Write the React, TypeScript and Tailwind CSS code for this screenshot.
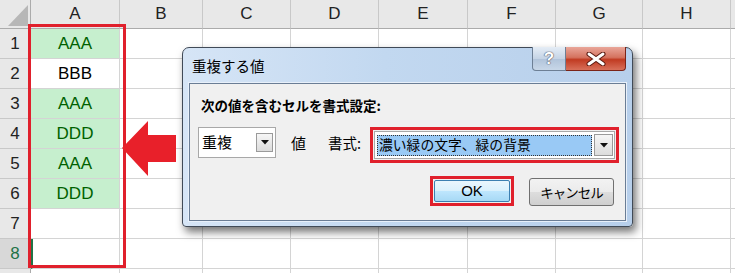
import React from "react";

const COLS = [
  { label: "A", w: 89 },
  { label: "B", w: 83 },
  { label: "C", w: 88 },
  { label: "D", w: 88 },
  { label: "E", w: 89 },
  { label: "F", w: 88 },
  { label: "G", w: 87 },
  { label: "H", w: 88 },
  { label: "", w: 60 },
];

const ROWS: { v: string; g: boolean }[] = [
  { v: "AAA", g: true },
  { v: "BBB", g: false },
  { v: "AAA", g: true },
  { v: "DDD", g: true },
  { v: "AAA", g: true },
  { v: "DDD", g: true },
  { v: "", g: false },
  { v: "", g: false },
  { v: "", g: false },
];

const latin = "font-['Liberation_Sans','Noto_Sans_CJK_JP',sans-serif]";
const jp = "font-['Noto_Sans_CJK_JP',sans-serif]";

function Sheet() {
  return (
    <div className={`flex flex-col ${latin} text-[17px] text-black`}>
      <div className="flex h-[29px] shrink-0">
        <div className="relative w-[31px] shrink-0 bg-[#e8e8e8] border-r border-b border-[#ababab]">
          <svg className="absolute left-0 top-0" width="31" height="29" viewBox="0 0 31 29">
            <polygon points="8,26 28,26 28,5" fill="#b7b7b7" />
          </svg>
        </div>
        {COLS.map((c, i) => (
          <div
            key={i}
            style={{ width: c.w }}
            className="shrink-0 flex items-center justify-center bg-[#e8e8e8] border-r border-[#c8c8c8] border-b border-b-[#ababab] text-[#222]"
          >
            {c.label}
          </div>
        ))}
      </div>
      {ROWS.map((r, ri) => (
        <div key={ri} className="flex h-[30px] shrink-0">
          <div
            className={`w-[31px] shrink-0 flex items-center justify-center border-r border-r-[#ababab] border-b border-[#c8c8c8] ${
              ri === 7 ? "bg-[#d8d8d8] text-[#217346]" : "bg-[#e8e8e8] text-[#222]"
            }`}
          >
            {ri < 8 ? ri + 1 : ""}
          </div>
          {COLS.map((c, ci) => (
            <div
              key={ci}
              style={{ width: c.w }}
              className={`shrink-0 flex items-center justify-center border-r border-b border-[#d4d4d4] ${
                ci === 0 && r.g ? "bg-[#c6efce] text-[#006100]" : "bg-white"
              } ${ci === 0 && ri === 7 ? "border-l-2 border-l-[#217346]" : ""}`}
            >
              {ci === 0 ? r.v : ""}
            </div>
          ))}
        </div>
      ))}
    </div>
  );
}

function Arrow() {
  return (
    <svg className="absolute left-[121px] top-[120px]" width="56" height="57" viewBox="0 0 56 57">
      <polygon points="1,28 27,1 27,15 55,15 55,42 27,42 27,56" fill="#e8202a" />
    </svg>
  );
}

function DropBtn({ w = 17, h = 20 }: { w?: number; h?: number }) {
  return (
    <div
      style={{ width: w, height: h }}
      className="flex items-center justify-center border border-[#9a9a9a] bg-[linear-gradient(#f6f6f6,#dcdcdc)]"
    >
      <svg width="8" height="5" viewBox="0 0 8 5">
        <polygon points="0,0 8,0 4,4.5" fill="#111" />
      </svg>
    </div>
  );
}

function Dialog() {
  return (
    <div className="absolute left-[182px] top-[47px] w-[451px] h-[180px] rounded-t-[7px] rounded-b-[4px] border border-[#404a57] bg-[linear-gradient(90deg,#d6e5f6,#c2d8f0_45%,#b7cfeb)] shadow-[3px_5px_8px_rgba(0,0,0,0.55)] flex flex-col">
      <div className="h-[35px] flex pl-[9px] pr-[6px] shrink-0">
        <div className={`${jp} text-[14.5px] text-black self-center mt-[1px]`}>重複する値</div>
        <div className="ml-auto flex h-[24px] -mt-[1px]">
          <div className="w-[34px] h-full rounded-bl-[4px] border border-[#6d7f95] border-t-0 bg-[linear-gradient(#e5edf6,#c5d4e6_50%,#b0c3da_51%,#c8d7e8)] flex items-center justify-center">
            <span className={`${latin} font-bold text-[17px] text-white [text-shadow:0_0_1px_#556,0_0_1px_#556,0_0_1px_#556]`}>?</span>
          </div>
          <div className="w-[60px] h-full rounded-br-[4px] border border-[#7b2418] border-t-0 border-l-0 bg-[linear-gradient(#e9a699,#d5735f_45%,#c13b22_55%,#d8705a)] flex items-center justify-center">
            <svg width="20" height="14" viewBox="0 0 20 14">
              <path d="M3 2 L17 12 M17 2 L3 12" stroke="#5a1a10" strokeWidth="5" strokeLinecap="round" />
              <path d="M3 2 L17 12 M17 2 L3 12" stroke="#fff" strokeWidth="3" strokeLinecap="round" />
            </svg>
          </div>
        </div>
      </div>
      <div className="mx-[6px] mb-[5px] flex-1 border border-[#6a7d95] outline outline-1 outline-[#e8f0fa] bg-[#f0f0f0] flex flex-col">
        <div className={`${jp} font-bold text-[13.5px] leading-[20px] text-black pl-[11px] pt-[11px]`}>
          次の値を含むセルを書式設定:
        </div>
        <div className="flex items-start pl-[8px] mt-[12px] h-[36px]">
          <div className="w-[78px] h-[31px] mt-[0px] border border-[#a8a8a8] bg-white flex items-center pl-[3px] pr-[2px]">
            <span className={`${jp} text-[15px] text-black`}>重複</span>
            <div className="ml-auto">
              <DropBtn w={17} h={19} />
            </div>
          </div>
          <div className={`${jp} text-[15px] text-black ml-[15px] mt-[5px]`}>値</div>
          <div className={`${jp} text-[14.5px] text-black ml-[22px] mt-[5px]`}>書式:</div>
          <div className="w-[249px] h-[36px] border-[3px] border-[#e0202c] p-[1px] box-border ml-auto mr-[6px]">
            <div className="w-full h-full border border-[#a8a8a8] bg-white flex items-center pl-[2px] pr-[1px]">
              <div className="flex-1 h-[21px] bg-[#99c9f5] border border-dotted border-[#333] flex items-center pl-[1px]">
                <span className={`${jp} text-[13.8px] text-black leading-none`}>濃い緑の文字、緑の背景</span>
              </div>
              <div className="ml-[2px]">
                <DropBtn w={19} h={22} />
              </div>
            </div>
          </div>
        </div>
        <div className="flex justify-end items-start mt-[13px] pr-[11px] gap-[15px]">
          <div className="w-[84px] h-[30px] border-[3px] border-[#e0202c] p-[1px]">
            <div className="w-full h-full rounded-[2px] border border-[#3c7fb1] bg-[linear-gradient(#eaf6fd,#d9f0fc_50%,#bee6fd_51%,#a7d9f5)] flex items-center justify-center">
              <span className={`${latin} text-[15px] text-black`}>OK</span>
            </div>
          </div>
          <div className="w-[85px] h-[28px] mt-[2px] rounded-[3px] border border-[#707070] bg-[linear-gradient(#f2f2f2,#ebebeb_50%,#dddddd_51%,#cfcfcf)] flex items-center justify-center">
            <span className={`${jp} text-[13.5px] tracking-[-1px] text-black`}>キャンセル</span>
          </div>
        </div>
      </div>
    </div>
  );
}

export default function App() {
  return (
    <div className="relative w-[735px] h-[273px] overflow-hidden bg-white">
      <Sheet />
      <div className="absolute left-[28px] top-[24px] w-[98px] h-[244px] border-[3px] border-[#e0202c]" />
      <Arrow />
      <Dialog />
    </div>
  );
}
